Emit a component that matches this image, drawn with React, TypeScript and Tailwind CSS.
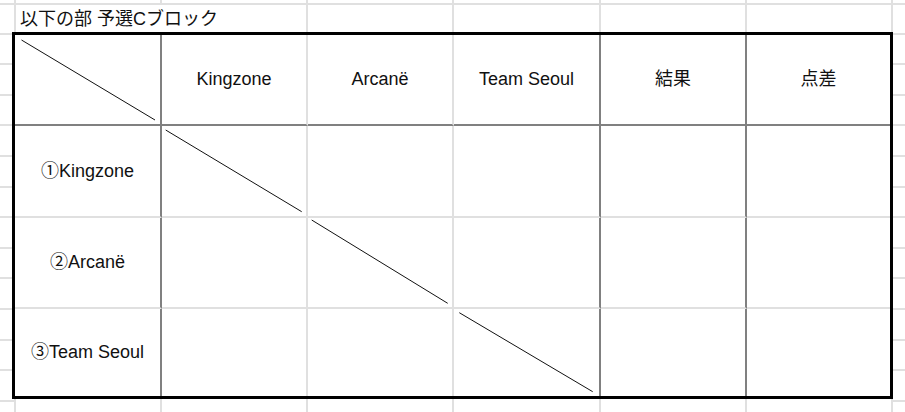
import React from 'react';

// light spreadsheet gridlines: #e0e0e0, inner table rules: #808080, outer frame: black

function Strip({ className }: { className: string }) {
  return (
    <div className={`flex ${className}`}>
      <div className="w-[16px] shrink-0 border-r-2 border-[#e0e0e0]" />
      <div className="w-[146px] shrink-0 border-r-2 border-[#e0e0e0]" />
      <div className="w-[146px] shrink-0 border-r-2 border-[#e0e0e0]" />
      <div className="w-[146px] shrink-0 border-r-2 border-[#e0e0e0]" />
      <div className="w-[147px] shrink-0 border-r-2 border-[#e0e0e0]" />
      <div className="w-[146px] shrink-0 border-r-2 border-[#e0e0e0]" />
      <div className="w-[146px] shrink-0 border-r-2 border-[#e0e0e0]" />
      <div className="flex-1" />
    </div>
  );
}

function Margin() {
  return (
    <div className="flex w-[12px] shrink-0 flex-col">
      <div className="h-[2.6px] shrink-0 border-b-2 border-[#e0e0e0]" />
      {Array.from({ length: 11 }).map((_, i) => (
        <div key={i} className="h-[30.6px] shrink-0 border-b-2 border-[#e0e0e0]" />
      ))}
      <div className="flex-1" />
    </div>
  );
}

function Diagonal({ x1, y1, x2, y2 }: { x1: number; y1: number; x2: number; y2: number }) {
  return (
    <svg className="block h-full w-full">
      <line x1={x1} y1={y1} x2={x2} y2={y2} stroke="#111" strokeWidth="1" />
    </svg>
  );
}

const teams = ['Kingzone', 'Arcanë', 'Team Seoul'];
const marks = ['①', '②', '③'];

export default function App() {
  return (
    <div className="flex h-[412px] w-[905px] flex-col overflow-hidden bg-white font-['Liberation_Sans','Noto_Sans_CJK_JP',sans-serif] text-[#111]">
      <Strip className="h-[5px] shrink-0 border-b-2 border-[#e0e0e0]" />

      <div className="flex h-[27px] shrink-0">
        <div className="w-[16px] shrink-0 border-r-2 border-[#e0e0e0]" />
        <div className="flex w-[292px] shrink-0 items-center whitespace-nowrap border-r-2 border-[#e0e0e0] pl-[4px] text-[18px] leading-none">
          以下の部 予選Cブロック
        </div>
        <div className="w-[146px] shrink-0 border-r-2 border-[#e0e0e0]" />
        <div className="w-[147px] shrink-0 border-r-2 border-[#e0e0e0]" />
        <div className="w-[146px] shrink-0 border-r-2 border-[#e0e0e0]" />
        <div className="w-[146px] shrink-0 border-r-2 border-[#e0e0e0]" />
        <div className="flex-1" />
      </div>

      <div className="flex h-[367px] shrink-0">
        <Margin />
        <div className="grid w-[881px] shrink-0 grid-cols-[147px_146px_146px_147px_146px_143px] grid-rows-[91px_92px_91px_87px] border-[3px] border-black text-[18px]">
          {/* header */}
          <div className="border-b-2 border-r-2 border-[#808080]">
            <Diagonal x1={6.5} y1={5} x2={140} y2={85} />
          </div>
          <div className="flex items-center justify-center border-b-2 border-b-[#808080] border-r-2 border-r-[#e0e0e0]">Kingzone</div>
          <div className="flex items-center justify-center border-b-2 border-b-[#808080] border-r-2 border-r-[#e0e0e0]">Arcanë</div>
          <div className="flex items-center justify-center border-b-2 border-r-2 border-[#808080]">Team Seoul</div>
          <div className="flex items-center justify-center border-b-2 border-r-2 border-[#808080]">結果</div>
          <div className="flex items-center justify-center border-b-2 border-[#808080]">点差</div>

          {teams.map((t, r) => {
            const last = r === teams.length - 1;
            const rowB = last ? '' : 'border-b-2 border-b-[#e0e0e0]';
            return (
              <React.Fragment key={t}>
                <div className={`flex items-center justify-center border-r-2 border-r-[#808080] ${rowB}`}>
                  {marks[r]}
                  {t}
                </div>
                {[0, 1, 2].map((c) => (
                  <div
                    key={c}
                    className={`border-r-2 ${c === 2 ? 'border-r-[#808080]' : 'border-r-[#e0e0e0]'} ${rowB}`}
                  >
                    {c === r && r === 0 && <Diagonal x1={3.7} y1={4} x2={139.7} y2={85.7} />}
                    {c === r && r === 1 && <Diagonal x1={3.7} y1={2} x2={139.7} y2={85.3} />}
                    {c === r && r === 2 && <Diagonal x1={5.3} y1={3.7} x2={138.7} y2={82.7} />}
                  </div>
                ))}
                <div className={`border-r-2 border-r-[#808080] ${rowB}`} />
                <div className={rowB} />
              </React.Fragment>
            );
          })}
        </div>
        <Margin />
      </div>

      <div className="flex flex-1">
        <div className="w-[16px] shrink-0 border-r-2 border-[#e0e0e0]">
          <div className="h-[2.8px] border-b-2 border-[#e0e0e0]" />
        </div>
        <div className="w-[146px] shrink-0 border-r-2 border-[#e0e0e0]" />
        <div className="w-[146px] shrink-0 border-r-2 border-[#e0e0e0]" />
        <div className="w-[146px] shrink-0 border-r-2 border-[#e0e0e0]" />
        <div className="w-[147px] shrink-0 border-r-2 border-[#e0e0e0]" />
        <div className="w-[146px] shrink-0 border-r-2 border-[#e0e0e0]" />
        <div className="w-[146px] shrink-0 border-r-2 border-[#e0e0e0]" />
        <div className="flex-1">
          <div className="h-[2.8px] border-b-2 border-[#e0e0e0]" />
        </div>
      </div>
    </div>
  );
}
